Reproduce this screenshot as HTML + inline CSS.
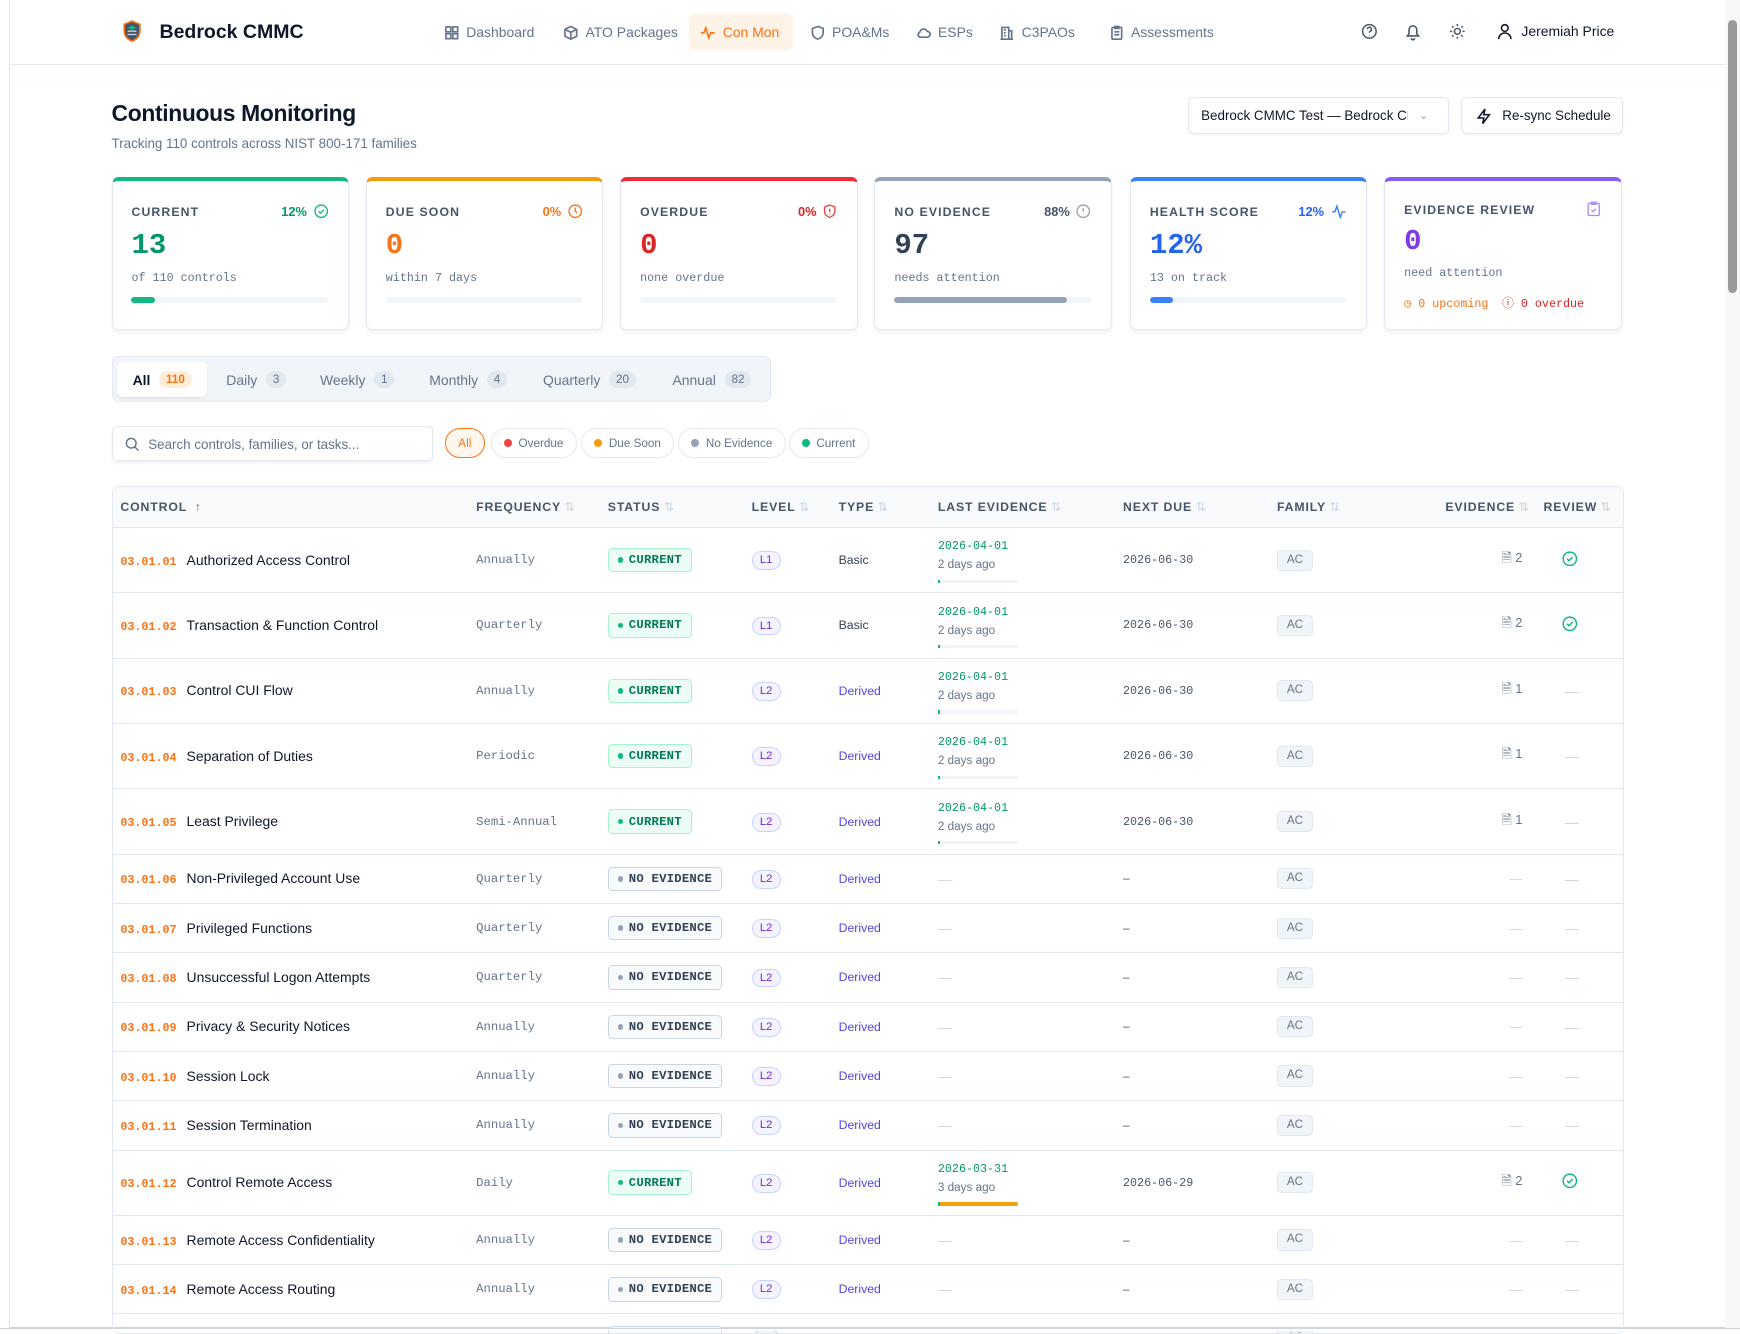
<!DOCTYPE html>
<html><head><meta charset="utf-8">
<style>
html{zoom:1.11538}
*{box-sizing:border-box;margin:0;padding:0}
body{width:1560px;height:1193px;overflow:hidden;background:#fff;font-family:"Liberation Sans",sans-serif;color:#0f172a;position:relative}
.mono{font-family:"Liberation Mono","DejaVu Sans Mono",monospace}
.frame{position:absolute;left:8px;top:0;width:1539px;height:1191px;border-left:1px solid #e2e8f0;border-bottom:1px solid #d1d5db}
.sb{position:absolute;left:1547px;top:0;width:13px;height:1193px;background:#f8f8f8}
.sb i{position:absolute;left:2px;top:18px;width:8px;height:245px;background:#9a9a9a;border-radius:4px}
.nav{position:absolute;left:9px;top:0;width:1538px;height:58px;border-bottom:1px solid #e2e8f0}
.a{position:absolute}
.navi{position:absolute;top:13px;height:32px;display:flex;align-items:center;gap:6px;font-size:12.5px;color:#64748b;padding:0 10px}
.navi svg{width:14px;height:14px;stroke:currentColor;fill:none;stroke-width:1.7}
.card{position:absolute;top:159px;width:213px;height:137px;border:1px solid #e2e8f0;border-radius:6px;box-shadow:0 2px 4px rgba(0,0,0,.06);border-top-width:4px}
.card .lb{position:absolute;left:17px;top:21px;font-size:11px;letter-spacing:1px;color:#475569;font-weight:600}
.card .pc{position:absolute;right:18px;top:20px;font-size:11.5px;font-weight:bold;display:flex;gap:6px;align-items:center}
.card .big{position:absolute;left:17px;top:43px;font-size:26px;font-weight:bold}
.card .sub{position:absolute;left:17px;top:80px;font-size:10.5px;color:#64748b}
.card .bar{position:absolute;left:17px;top:104px;width:176px;height:5px;background:#f1f5f9;border-radius:3px;overflow:hidden}
.card .bar i{display:block;height:100%;border-radius:3px}
.tabs{position:absolute;left:100px;top:319px;width:591px;height:41px;background:#f1f5f9;border:1px solid #e2e8f0;border-radius:6px}
.tab{position:absolute;top:5px;height:31px;display:flex;align-items:center;gap:8px;font-size:12.5px;color:#64748b;padding:0 14px}
.tab b{font-weight:normal;font-size:10.5px;background:#e2e8f0;border-radius:9px;padding:2px 6px;color:#64748b}
.chip{position:absolute;top:384px;height:27px;border:1px solid #e2e8f0;border-radius:14px;font-size:10.5px;color:#64748b;display:flex;align-items:center;gap:6px;padding:0 11px}
.chip i{width:7px;height:7px;border-radius:50%;display:inline-block}
.tbl{position:absolute;left:100px;top:436px;width:1356px;height:760px;border:1px solid #e2e8f0;border-radius:6px;overflow:hidden}
table{border-collapse:collapse;width:1354px;table-layout:fixed}
th{height:36px;background:#f8fafc;text-align:left;font-size:11px;letter-spacing:.8px;color:#475569;font-weight:600;padding-left:7px;border-bottom:1px solid #e2e8f0;white-space:nowrap}
th s{text-decoration:none;color:#cbd5e1;font-weight:normal;margin-left:3px}
td{padding-left:7px;border-bottom:1px solid #e2e8f0;font-size:12.5px;white-space:nowrap;vertical-align:middle}
tr.t td{height:58.6px}
tr.s td{height:44.2px}
.id{color:#f97316;font-weight:bold;font-size:10.5px;margin-right:9px}
.fq{color:#64748b;font-size:11px}
.st{display:inline-flex;align-items:center;gap:5px;height:22px;padding:0 8px;border-radius:4px;font-size:11px;font-weight:bold;letter-spacing:.2px}
.cur{background:#ecfdf5;border:1px solid #a7f3d0;color:#047857}
.cur i{background:#10b981}
.ne{background:#f8fafc;border:1px solid #cbd5e1;color:#334155}
.ne i{background:#94a3b8}
.st i{width:5px;height:5px;border-radius:50%;display:inline-block}
.lv{display:inline-block;width:26px;height:17px;border-radius:9px;border:1px solid #c7d2fe;background:#f5f3ff;color:#6d28d9;font-size:10px;text-align:center;line-height:15px}
.ty{font-size:11px;color:#334155}
.dv{color:#4f46e5}
.le{font-size:10.5px;color:#059669;line-height:17px}
.le small{display:block;font-family:"Liberation Sans",sans-serif;color:#64748b;font-size:10.5px}
.le u{display:block;text-decoration:none;width:72px;height:3px;background:#f1f5f9;border-radius:2px;margin-top:4px;position:relative}
.le u:before{content:"";position:absolute;left:0;top:0;height:3px;width:2px;background:#10b981}
.nd{font-size:10.5px;color:#475569}
.fam{display:inline-block;height:19px;padding:0 8px;border-radius:4px;background:#f1f5f9;border:1px solid #e2e8f0;font-size:10.5px;color:#64748b;line-height:17px}
.ev{text-align:right;padding-right:12px;color:#64748b;font-size:11.5px}
.dash{color:#cbd5e1}
</style></head><body>
<div class="frame"></div>
<div class="sb"><i></i></div>
<div class="nav">
  <svg class="a" style="left:100px;top:18px" width="18" height="20" viewBox="0 0 18 20"><path d="M9 1 L16 4 V10 C16 15 12 18 9 19 C6 18 2 15 2 10 V4 Z" fill="#475569" stroke="#f97316" stroke-width="1.5"/><path d="M5 7 L9 5 L13 7 L9 9Z" fill="#10b981"/><path d="M5 10h8M5 13h8" stroke="#cbd5e1" stroke-width="1.2"/></svg>
  <div class="a" style="left:134px;top:19px;font-size:17.5px;font-weight:bold;color:#0f172a">Bedrock CMMC</div>
  <div class="navi" style="left:379px"><svg viewBox="0 0 16 16"><rect x="2" y="2" width="5" height="5"/><rect x="9" y="2" width="5" height="5"/><rect x="2" y="9" width="5" height="5"/><rect x="9" y="9" width="5" height="5"/></svg>Dashboard</div>
  <div class="navi" style="left:486px"><svg viewBox="0 0 16 16"><path d="M8 1.5 14 4.5V11.5L8 14.5 2 11.5V4.5Z M2 4.5 8 7.5 14 4.5 M8 7.5V14.5"/></svg>ATO Packages</div>
  <div class="navi" style="left:609px;background:#fff3e8;color:#f97316;border-radius:6px;width:93px"><svg viewBox="0 0 16 16"><path d="M1 8h3l2-5 3 10 2-5h4"/></svg>Con Mon</div>
  <div class="navi" style="left:707px"><svg viewBox="0 0 16 16"><path d="M8 1.5 13.5 3.5V8C13.5 11.5 11 13.5 8 14.5 5 13.5 2.5 11.5 2.5 8V3.5Z"/></svg>POA&amp;Ms</div>
  <div class="navi" style="left:802px"><svg viewBox="0 0 16 16"><path d="M4.5 12.5h7a3 3 0 0 0 0-6 4 4 0 0 0-7.6 1A2.6 2.6 0 0 0 4.5 12.5Z"/></svg>ESPs</div>
  <div class="navi" style="left:877px"><svg viewBox="0 0 16 16"><path d="M3 14.5V2.5h7v12M10 6h3v8.5M1.5 14.5h13M5 5h2M5 8h2M5 11h2"/></svg>C3PAOs</div>
  <div class="navi" style="left:975px"><svg viewBox="0 0 16 16"><rect x="3" y="2.5" width="10" height="12" rx="1"/><path d="M6 1.5h4v2H6zM5.5 7h5M5.5 10h5"/></svg>Assessments</div>
  <svg class="a" style="left:1211px;top:21px" width="15" height="15" viewBox="0 0 16 16" fill="none" stroke="#475569" stroke-width="1.4"><circle cx="8" cy="8" r="6.5"/><path d="M6 6a2 2 0 1 1 2.5 2c-.5.2-.5.7-.5 1.3M8 11.5v.5"/></svg>
  <svg class="a" style="left:1250px;top:20px" width="16" height="17" viewBox="0 0 16 17" fill="none" stroke="#475569" stroke-width="1.4"><path d="M3 12.5h10l-1.5-2V7a3.5 3.5 0 0 0-7 0v3.5Z M6.5 14.5a1.5 1.5 0 0 0 3 0"/></svg>
  <svg class="a" style="left:1290px;top:21px" width="15" height="15" viewBox="0 0 16 16" fill="none" stroke="#475569" stroke-width="1.4"><circle cx="8" cy="8" r="2.8"/><path d="M8 1v2M8 13v2M1 8h2M13 8h2M3 3l1.4 1.4M11.6 11.6 13 13M3 13l1.4-1.4M11.6 4.4 13 3"/></svg>
  <svg class="a" style="left:1333px;top:21px" width="14" height="15" viewBox="0 0 14 15" fill="none" stroke="#0f172a" stroke-width="1.4"><circle cx="7" cy="4.5" r="3"/><path d="M1.5 14.5a5.5 5.5 0 0 1 11 0"/></svg>
  <div class="a" style="left:1355px;top:21px;font-size:12.5px;color:#0f172a">Jeremiah Price</div>
</div>

<div class="a" style="left:100px;top:90px;font-size:20.5px;font-weight:bold;letter-spacing:-.3px">Continuous Monitoring</div>
<div class="a" style="left:100px;top:122px;font-size:12px;color:#64748b">Tracking 110 controls across NIST 800-171 families</div>

<div class="a" style="left:1065px;top:87px;width:234px;height:33px;border:1px solid #e2e8f0;border-radius:5px;box-shadow:0 1px 2px rgba(0,0,0,.05);font-size:12px;padding:9px 0 0 11px;overflow:hidden;white-space:nowrap">Bedrock CMMC Test — Bedrock CMMC<span style="position:absolute;right:0;top:0;width:36px;height:31px;background:#fff;color:#94a3b8;font-size:10px;padding:10px 0 0 10px">&#8964;</span></div>
<div class="a" style="left:1310px;top:87px;width:145px;height:33px;border:1px solid #e2e8f0;border-radius:5px;box-shadow:0 1px 2px rgba(0,0,0,.05);font-size:12px;padding:9px 0 0 36px">Re-sync Schedule
<svg class="a" style="left:12px;top:9px" width="14" height="15" viewBox="0 0 14 15" fill="none" stroke="#0f172a" stroke-width="1.4"><path d="M8 1 2 9h5l-1 5 6-8H7Z"/></svg></div>

<div class="card" style="left:100px;border-top-color:#10b981"><div class="lb">CURRENT</div><div class="pc" style="color:#059669">12% <svg width="13" height="13" viewBox="0 0 14 14" fill="none" stroke="#10b981" stroke-width="1.3"><circle cx="7" cy="7" r="6"/><path d="M4.5 7 6.3 8.8 9.5 5.5"/></svg></div><div class="big mono" style="color:#059669">13</div><div class="sub mono">of 110 controls</div><div class="bar"><i style="width:12%;background:#10b981"></i></div></div>
<div class="card" style="left:328px;border-top-color:#f59e0b"><div class="lb">DUE SOON</div><div class="pc" style="color:#f97316">0% <svg width="13" height="13" viewBox="0 0 14 14" fill="none" stroke="#f97316" stroke-width="1.3"><circle cx="7" cy="7" r="6"/><path d="M7 3.5V7l2 1.5"/></svg></div><div class="big mono" style="color:#f97316">0</div><div class="sub mono">within 7 days</div><div class="bar"></div></div>
<div class="card" style="left:556px;border-top-color:#ef2b3a"><div class="lb">OVERDUE</div><div class="pc" style="color:#dc2626">0% <svg width="12" height="13" viewBox="0 0 12 14" fill="none" stroke="#ef4444" stroke-width="1.3"><path d="M6 1 11 3V7C11 10 8.5 12 6 13 3.5 12 1 10 1 7V3Z"/><path d="M6 4.5V8M6 9.5v.6"/></svg></div><div class="big mono" style="color:#dc2626">0</div><div class="sub mono">none overdue</div><div class="bar"></div></div>
<div class="card" style="left:784px;border-top-color:#94a3b8"><div class="lb">NO EVIDENCE</div><div class="pc" style="color:#475569">88% <svg width="13" height="13" viewBox="0 0 14 14" fill="none" stroke="#94a3b8" stroke-width="1.3"><circle cx="7" cy="7" r="6"/><path d="M7 4v3.5M7 9.5v.5"/></svg></div><div class="big mono" style="color:#334155">97</div><div class="sub mono">needs attention</div><div class="bar"><i style="width:88%;background:#94a3b8"></i></div></div>
<div class="card" style="left:1013px;border-top-color:#3b82f6"><div class="lb">HEALTH SCORE</div><div class="pc" style="color:#2563eb">12% <svg width="14" height="14" viewBox="0 0 14 14" fill="none" stroke="#3b82f6" stroke-width="1.3"><path d="M1 7h2.5l1.8-5 3 10 1.8-5H13"/></svg></div><div class="big mono" style="color:#2563eb">12%</div><div class="sub mono">13 on track</div><div class="bar"><i style="width:12%;background:#3b82f6"></i></div></div>
<div class="card" style="left:1241px;border-top-color:#8b5cf6"><div class="lb" style="top:19px">EVIDENCE REVIEW</div><div class="pc" style="top:18px"><svg width="12" height="14" viewBox="0 0 12 14" fill="none" stroke="#a78bfa" stroke-width="1.2"><rect x="1" y="2" width="10" height="11" rx="1"/><path d="M4 1h4v2H4zM4 8l1.5 1.5L8 7"/></svg></div><div class="big mono" style="color:#7c3aed;top:39px">0</div><div class="sub mono" style="top:76px">need attention</div><div class="a mono" style="left:17px;top:101px;font-size:10.5px;color:#f97316">&#9719; 0 upcoming <span style="color:#dc2626;margin-left:6px">&#9432; 0 overdue</span></div></div>

<div class="tabs">
  <div class="tab" style="left:4px;background:#fff;border-radius:5px;color:#0f172a;font-weight:bold;box-shadow:0 1px 2px rgba(0,0,0,.08)">All <b style="background:#ffedd5;color:#f97316;font-weight:bold">110</b></div>
  <div class="tab" style="left:88px">Daily <b>3</b></div>
  <div class="tab" style="left:172px">Weekly <b>1</b></div>
  <div class="tab" style="left:270px">Monthly <b>4</b></div>
  <div class="tab" style="left:372px">Quarterly <b>20</b></div>
  <div class="tab" style="left:488px">Annual <b>82</b></div>
</div>

<div class="a" style="left:100px;top:382px;width:288px;height:31px;border:1px solid #e2e8f0;border-radius:4px;box-shadow:0 2px 4px rgba(0,0,0,.05);font-size:12px;color:#64748b;padding:9px 0 0 32px">Search controls, families, or tasks...
<svg class="a" style="left:11px;top:9px" width="13" height="13" viewBox="0 0 14 14" fill="none" stroke="#64748b" stroke-width="1.4"><circle cx="6" cy="6" r="4.7"/><path d="M9.5 9.5 13 13"/></svg></div>
<div class="chip" style="left:399px;border-color:#f97316;color:#f97316;background:#fff7ed">All</div>
<div class="chip" style="left:440px"><i style="background:#ef4444"></i>Overdue</div>
<div class="chip" style="left:521px"><i style="background:#f59e0b"></i>Due Soon</div>
<div class="chip" style="left:608px"><i style="background:#94a3b8"></i>No Evidence</div>
<div class="chip" style="left:707px"><i style="background:#10b981"></i>Current</div>

<div class="tbl"><table>
<colgroup><col style="width:319px"><col style="width:118px"><col style="width:129px"><col style="width:78px"><col style="width:89px"><col style="width:166px"><col style="width:138px"><col style="width:151px"><col style="width:88px"><col style="width:78px"></colgroup>
<tr><th>CONTROL <s style="color:#64748b">↑</s></th><th>FREQUENCY<s>⇅</s></th><th>STATUS<s>⇅</s></th><th>LEVEL<s>⇅</s></th><th>TYPE<s>⇅</s></th><th>LAST EVIDENCE<s>⇅</s></th><th>NEXT DUE<s>⇅</s></th><th>FAMILY<s>⇅</s></th><th style="text-align:right;padding-right:8px">EVIDENCE<s>⇅</s></th><th>REVIEW<s>⇅</s></th></tr>
<tr class="t"><td><span class="id mono">03.01.01</span>Authorized Access Control</td><td class="fq mono">Annually</td><td><span class="st cur mono"><i></i>CURRENT</span></td><td><span class="lv">L1</span></td><td class="ty">Basic</td><td class="le mono">2026-04-01<small>2 days ago</small><u></u></td><td class="nd mono">2026-06-30</td><td><span class="fam">AC</span></td><td class="ev">🗎 2</td><td style="padding-left:24px"><svg width="14" height="14" viewBox="0 0 14 14" fill="none" stroke="#10b981" stroke-width="1.3"><circle cx="7" cy="7" r="6"/><path d="M4.5 7 6.3 8.8 9.5 5.5"/></svg></td></tr>
<tr class="t"><td><span class="id mono">03.01.02</span>Transaction &amp; Function Control</td><td class="fq mono">Quarterly</td><td><span class="st cur mono"><i></i>CURRENT</span></td><td><span class="lv">L1</span></td><td class="ty">Basic</td><td class="le mono">2026-04-01<small>2 days ago</small><u></u></td><td class="nd mono">2026-06-30</td><td><span class="fam">AC</span></td><td class="ev">🗎 2</td><td style="padding-left:24px"><svg width="14" height="14" viewBox="0 0 14 14" fill="none" stroke="#10b981" stroke-width="1.3"><circle cx="7" cy="7" r="6"/><path d="M4.5 7 6.3 8.8 9.5 5.5"/></svg></td></tr>
<tr class="t"><td><span class="id mono">03.01.03</span>Control CUI Flow</td><td class="fq mono">Annually</td><td><span class="st cur mono"><i></i>CURRENT</span></td><td><span class="lv">L2</span></td><td class="ty dv">Derived</td><td class="le mono">2026-04-01<small>2 days ago</small><u></u></td><td class="nd mono">2026-06-30</td><td><span class="fam">AC</span></td><td class="ev">🗎 1</td><td class="dash" style="padding-left:26px">—</td></tr>
<tr class="t"><td><span class="id mono">03.01.04</span>Separation of Duties</td><td class="fq mono">Periodic</td><td><span class="st cur mono"><i></i>CURRENT</span></td><td><span class="lv">L2</span></td><td class="ty dv">Derived</td><td class="le mono">2026-04-01<small>2 days ago</small><u></u></td><td class="nd mono">2026-06-30</td><td><span class="fam">AC</span></td><td class="ev">🗎 1</td><td class="dash" style="padding-left:26px">—</td></tr>
<tr class="t"><td><span class="id mono">03.01.05</span>Least Privilege</td><td class="fq mono">Semi-Annual</td><td><span class="st cur mono"><i></i>CURRENT</span></td><td><span class="lv">L2</span></td><td class="ty dv">Derived</td><td class="le mono">2026-04-01<small>2 days ago</small><u></u></td><td class="nd mono">2026-06-30</td><td><span class="fam">AC</span></td><td class="ev">🗎 1</td><td class="dash" style="padding-left:26px">—</td></tr>
<tr class="s"><td><span class="id mono">03.01.06</span>Non-Privileged Account Use</td><td class="fq mono">Quarterly</td><td><span class="st ne mono"><i></i>NO EVIDENCE</span></td><td><span class="lv">L2</span></td><td class="ty dv">Derived</td><td class="dash">—</td><td class="nd">–</td><td><span class="fam">AC</span></td><td class="ev dash">—</td><td class="dash" style="padding-left:26px">—</td></tr>
<tr class="s"><td><span class="id mono">03.01.07</span>Privileged Functions</td><td class="fq mono">Quarterly</td><td><span class="st ne mono"><i></i>NO EVIDENCE</span></td><td><span class="lv">L2</span></td><td class="ty dv">Derived</td><td class="dash">—</td><td class="nd">–</td><td><span class="fam">AC</span></td><td class="ev dash">—</td><td class="dash" style="padding-left:26px">—</td></tr>
<tr class="s"><td><span class="id mono">03.01.08</span>Unsuccessful Logon Attempts</td><td class="fq mono">Quarterly</td><td><span class="st ne mono"><i></i>NO EVIDENCE</span></td><td><span class="lv">L2</span></td><td class="ty dv">Derived</td><td class="dash">—</td><td class="nd">–</td><td><span class="fam">AC</span></td><td class="ev dash">—</td><td class="dash" style="padding-left:26px">—</td></tr>
<tr class="s"><td><span class="id mono">03.01.09</span>Privacy &amp; Security Notices</td><td class="fq mono">Annually</td><td><span class="st ne mono"><i></i>NO EVIDENCE</span></td><td><span class="lv">L2</span></td><td class="ty dv">Derived</td><td class="dash">—</td><td class="nd">–</td><td><span class="fam">AC</span></td><td class="ev dash">—</td><td class="dash" style="padding-left:26px">—</td></tr>
<tr class="s"><td><span class="id mono">03.01.10</span>Session Lock</td><td class="fq mono">Annually</td><td><span class="st ne mono"><i></i>NO EVIDENCE</span></td><td><span class="lv">L2</span></td><td class="ty dv">Derived</td><td class="dash">—</td><td class="nd">–</td><td><span class="fam">AC</span></td><td class="ev dash">—</td><td class="dash" style="padding-left:26px">—</td></tr>
<tr class="s"><td><span class="id mono">03.01.11</span>Session Termination</td><td class="fq mono">Annually</td><td><span class="st ne mono"><i></i>NO EVIDENCE</span></td><td><span class="lv">L2</span></td><td class="ty dv">Derived</td><td class="dash">—</td><td class="nd">–</td><td><span class="fam">AC</span></td><td class="ev dash">—</td><td class="dash" style="padding-left:26px">—</td></tr>
<tr class="t"><td><span class="id mono">03.01.12</span>Control Remote Access</td><td class="fq mono">Daily</td><td><span class="st cur mono"><i></i>CURRENT</span></td><td><span class="lv">L2</span></td><td class="ty dv">Derived</td><td class="le mono">2026-03-31<small>3 days ago</small><u style="background:#f59e0b"></u></td><td class="nd mono">2026-06-29</td><td><span class="fam">AC</span></td><td class="ev">🗎 2</td><td style="padding-left:24px"><svg width="14" height="14" viewBox="0 0 14 14" fill="none" stroke="#10b981" stroke-width="1.3"><circle cx="7" cy="7" r="6"/><path d="M4.5 7 6.3 8.8 9.5 5.5"/></svg></td></tr>
<tr class="s"><td><span class="id mono">03.01.13</span>Remote Access Confidentiality</td><td class="fq mono">Annually</td><td><span class="st ne mono"><i></i>NO EVIDENCE</span></td><td><span class="lv">L2</span></td><td class="ty dv">Derived</td><td class="dash">—</td><td class="nd">–</td><td><span class="fam">AC</span></td><td class="ev dash">—</td><td class="dash" style="padding-left:26px">—</td></tr>
<tr class="s"><td><span class="id mono">03.01.14</span>Remote Access Routing</td><td class="fq mono">Annually</td><td><span class="st ne mono"><i></i>NO EVIDENCE</span></td><td><span class="lv">L2</span></td><td class="ty dv">Derived</td><td class="dash">—</td><td class="nd">–</td><td><span class="fam">AC</span></td><td class="ev dash">—</td><td class="dash" style="padding-left:26px">—</td></tr>
<tr class="s"><td><span class="id mono">03.01.15</span>Privileged Remote Access</td><td class="fq mono">Annually</td><td><span class="st ne mono"><i></i>NO EVIDENCE</span></td><td><span class="lv">L2</span></td><td class="ty dv">Derived</td><td class="dash">—</td><td class="nd">–</td><td><span class="fam">AC</span></td><td class="ev dash">—</td><td class="dash" style="padding-left:26px">—</td></tr>
</table></div>
<div class="a" style="left:0;top:1191px;width:1560px;height:2px;background:#fff;border-top:1px solid #d1d5db"></div>
</body></html>
